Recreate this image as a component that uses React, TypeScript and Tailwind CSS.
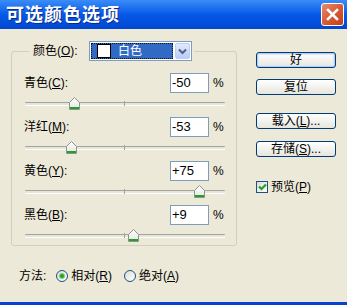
import React from "react";

const rows = [
  { label: "青色", key: "C", value: -50 },
  { label: "洋红", key: "M", value: -53 },
  { label: "黄色", key: "Y", value: 75 },
  { label: "黑色", key: "B", value: 9 },
];

function Thumb() {
  return (
    <svg width="11" height="13" viewBox="0 0 11 13">
      <defs>
        <linearGradient id="thumbFill" x1="0" y1="0" x2="0" y2="1">
          <stop offset="0" stopColor="#FFFFFF" />
          <stop offset="1" stopColor="#E6E5DE" />
        </linearGradient>
      </defs>
      <path d="M0.5 5.5 L5.5 0.5 L10.5 5.5 V12.5 H0.5 Z" fill="url(#thumbFill)" stroke="#8F9295" />
      <rect x="1" y="10" width="9" height="2" fill="#21A121" />
    </svg>
  );
}

function Slider({ value }: { value: number }) {
  return (
    <div className="relative ml-[13px] h-[20px] w-[200px]">
      <div className="absolute left-0 right-0 top-[9px] h-[3px] rounded-[1px] border-t border-[#A5A49A] bg-[#E6E5DC] shadow-[0_1px_0_#FFFFFF]" />
      <div className="absolute left-[99px] top-[8px] h-[5px] w-px bg-[#A0A0A0]" />
      <div className="absolute top-[4px]" style={{ left: value + 94 }}>
        <Thumb />
      </div>
    </div>
  );
}

function XpButton({ children, primary }: { children: React.ReactNode; primary?: boolean }) {
  return (
    <button
      type="button"
      className={
        primary
          ? "flex h-[16px] w-[80px] items-center justify-center rounded-[3px] border border-[#003C74] bg-gradient-to-b from-white to-[#E6E5DE] text-[12px] leading-none text-black shadow-[inset_0_0_0_1px_#B6CCF5,inset_0_0_0_2px_#DCE6FA]"
          : "flex h-[16px] w-[80px] items-center justify-center rounded-[3px] border border-[#003C74] bg-gradient-to-b from-white to-[#E6E5DE] text-[12px] leading-none text-black"
      }
    >
      {children}
    </button>
  );
}

function Radio({ checked }: { checked?: boolean }) {
  return (
    <span className="flex h-[12px] w-[12px] items-center justify-center rounded-full border border-[#1C5180] bg-gradient-to-br from-[#DCDCD6] to-white">
      {checked && <span className="h-[4px] w-[4px] rounded-full bg-[#23A323] shadow-[0_0_0_1px_#7FD07F]" />}
    </span>
  );
}

export default function App() {
  return (
    <div className="flex h-[305px] w-[347px] flex-col overflow-hidden bg-[#ECE9D8] font-[Liberation_Sans,Noto_Sans_CJK_SC,sans-serif] text-[12px] text-black">
      {/* Title bar */}
      <div className="flex h-[29px] shrink-0 items-center justify-between bg-gradient-to-b from-[#3A8CF8] via-[#0558E8] to-[#0147D2] pl-[6px] pr-[3px]">
        <span className="text-[18px] font-bold leading-none tracking-[1px] text-white [text-shadow:1px_1px_0_#0B2A86]">
          可选颜色选项
        </span>
        <div className="flex h-[23px] w-[23px] items-center justify-center rounded-[3px] border border-white bg-gradient-to-br from-[#E88C6C] via-[#D85A36] to-[#C23D17]">
          <svg width="13" height="13" viewBox="0 0 13 13">
            <path d="M2 2 L11 11 M11 2 L2 11" stroke="#FFFFFF" strokeWidth="2.6" strokeLinecap="square" />
          </svg>
        </div>
      </div>

      {/* Body */}
      <div className="flex flex-1 flex-col">
        <div className="flex pl-[11px] pt-[22px]">
          {/* Group box */}
          <div className="relative h-[195px] w-[226px] rounded-[3px] border border-[#D0D0BF]">
            <div className="absolute left-[17px] top-[-11px] flex h-[20px] items-center bg-[#ECE9D8] pl-[4px] pr-[2px]">
              <span className="w-[56px] whitespace-nowrap">
                颜色(<span className="underline">O</span>):
              </span>
              <div className="flex h-[20px] w-[103px] items-center border border-[#7F9DB9] bg-white p-[1px]">
                <div className="flex h-full flex-1 items-center border border-dotted border-[#111] bg-[#316AC5] pl-[5px]">
                  <span className="h-[14px] w-[14px] border border-black bg-white" />
                  <span className="ml-[7px] text-white">白色</span>
                </div>
                <div className="ml-[2px] flex h-full w-[15px] items-center justify-center rounded-[2px] border border-[#B9CDF7] bg-gradient-to-b from-[#E2EBFD] to-[#B7CCF8]">
                  <svg width="9" height="7" viewBox="0 0 9 7">
                    <path d="M1 1.5 L4.5 5 L8 1.5" fill="none" stroke="#4D6185" strokeWidth="2" />
                  </svg>
                </div>
              </div>
            </div>

            <div className="flex flex-col gap-[4px] pt-[21px]">
              {rows.map((r) => (
                <div key={r.key} className="flex flex-col">
                  <div className="flex h-[20px] items-center pl-[12px]">
                    <span className="w-[146px] whitespace-nowrap">
                      {r.label}(<span className="underline">{r.key}</span>):
                    </span>
                    <div className="flex h-[20px] w-[39px] items-center border border-[#7F9DB9] bg-white pl-[1px] text-[13px]">
                      {r.value > 0 ? `+${r.value}` : r.value}
                    </div>
                    <span className="ml-[4px]">%</span>
                  </div>
                  <Slider value={r.value} />
                </div>
              ))}
            </div>
          </div>

          {/* Buttons */}
          <div className="ml-[19px] flex flex-col pt-[1px]">
            <XpButton primary>好</XpButton>
            <div className="mt-[11px]">
              <XpButton>复位</XpButton>
            </div>
            <div className="mt-[18px]">
              <XpButton>
                载入(<span className="underline">L</span>)...
              </XpButton>
            </div>
            <div className="mt-[12px]">
              <XpButton>
                存储(<span className="underline">S</span>)...
              </XpButton>
            </div>
            <div className="mt-[21px] flex items-center">
              <span className="flex h-[12px] w-[12px] items-center justify-center border border-[#1C5180] bg-gradient-to-br from-[#DCDCD6] to-white">
                <svg width="9" height="8" viewBox="0 0 9 8">
                  <path d="M1 3.5 L3.5 6 L8 1.5" fill="none" stroke="#21A121" strokeWidth="2.2" />
                </svg>
              </span>
              <span className="ml-[3px]">
                预览(<span className="underline">P</span>)
              </span>
            </div>
          </div>
        </div>

        {/* Method */}
        <div className="mt-[20px] flex h-[20px] items-center pl-[19px]">
          <span>方法:</span>
          <span className="ml-[10px]">
            <Radio checked />
          </span>
          <span className="ml-[3px]">
            相对(<span className="underline">R</span>)
          </span>
          <span className="ml-[12px]">
            <Radio />
          </span>
          <span className="ml-[3px]">
            绝对(<span className="underline">A</span>)
          </span>
        </div>
      </div>

      <div className="h-[3px] shrink-0 bg-[#0842D0]" />
    </div>
  );
}
